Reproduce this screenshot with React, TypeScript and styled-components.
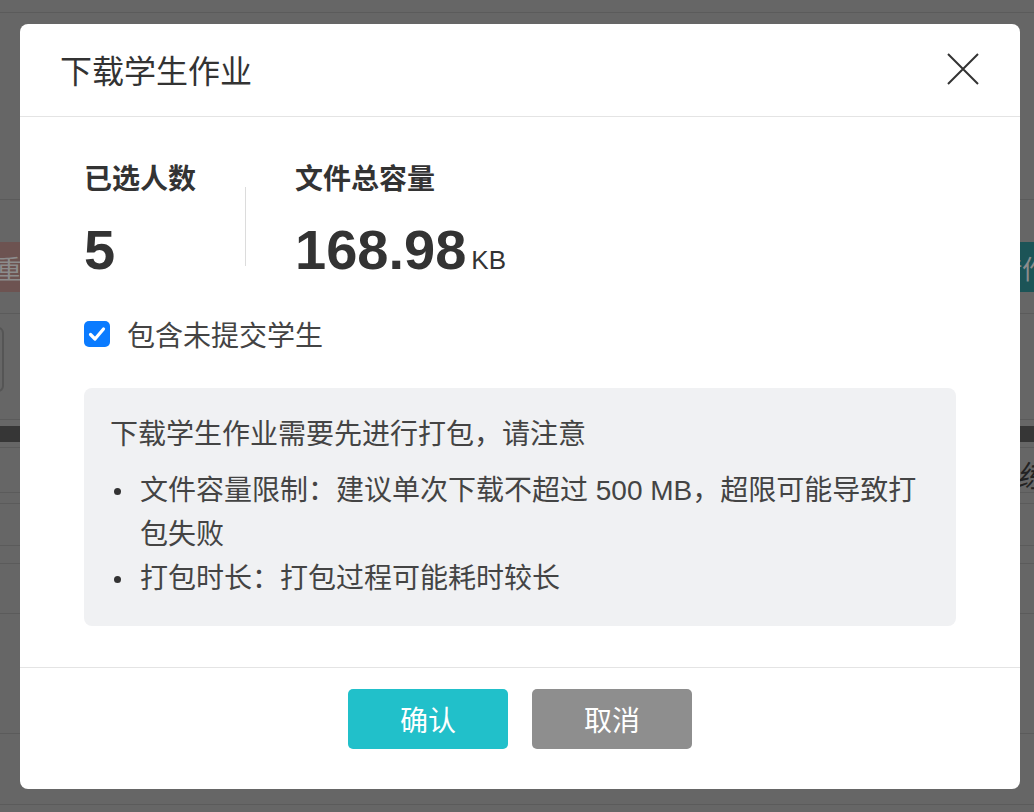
import React, { useState } from "react";
import styled, { createGlobalStyle } from "styled-components";

const GlobalStyle = createGlobalStyle`
  html, body {
    margin: 0;
    padding: 0;
  }
  body {
    font-family: "Helvetica Neue", "Liberation Sans", "Noto Sans CJK SC", sans-serif;
    color: #333;
  }
  * {
    box-sizing: border-box;
  }
`;

const Screen = styled.div`
  position: relative;
  width: 1034px;
  height: 812px;
  overflow: hidden;
  background: #666;
`;

/* dimmed page behind the dialog */
const BgPage = styled.div`
  display: flex;
  flex-direction: column;
`;

const BgRow = styled.div<{ $h: number; $top?: number }>`
  height: ${(p) => p.$h}px;
  padding-top: ${(p) => p.$top ?? 0}px;
  border-bottom: 1px solid #5b5b5b;
  display: flex;
  align-items: flex-start;
  justify-content: space-between;
`;

const BgSpacer = styled.div<{ $h: number }>`
  height: ${(p) => p.$h}px;
`;

const BgDarkBar = styled.div`
  height: 16px;
  background: #363636;
`;

const BgButton = styled.div<{ $tone: "red" | "teal" }>`
  height: 50px;
  width: 120px;
  display: flex;
  align-items: center;
  padding: ${(p) => (p.$tone === "red" ? "0" : "0 0 0 82px")};
  background: ${(p) => (p.$tone === "red" ? "#6d5351" : "#1c5457")};
  color: #8c8c8c;
  font-size: 26px;
  text-indent: ${(p) => (p.$tone === "red" ? "-4px" : "0")};
  white-space: nowrap;
`;

const BgInput = styled.div`
  margin-top: 13px;
  margin-left: -40px;
  width: 44px;
  height: 65px;
  border: 2px solid #555;
  border-radius: 6px;
`;

const BgText = styled.div`
  margin: 4px -12px 0 0;
  font-size: 30px;
  font-style: italic;
  color: #222;
`;

/* dialog */
const Overlay = styled.div`
  position: absolute;
  inset: 0;
  padding-left: 6px;
  display: flex;
  align-items: center;
  justify-content: center;
`;

const Dialog = styled.div`
  width: 1000px;
  background: #fff;
  border-radius: 8px;
  overflow: hidden;
`;

const Header = styled.div`
  height: 93px;
  padding: 0 41px 2px 40px;
  border-bottom: 1px solid #e4e4e4;
  display: flex;
  align-items: center;
  justify-content: space-between;
`;

const Title = styled.h2`
  margin: 0;
  font-size: 32px;
  font-weight: 400;
  color: #333;
`;

const CloseButton = styled.button`
  width: 32px;
  height: 32px;
  padding: 0;
  border: none;
  background: none;
  cursor: pointer;
  display: flex;
  align-items: center;
  justify-content: center;
`;

const Body = styled.div`
  padding: 43px 64px 41px;
`;

const Stats = styled.div`
  display: flex;
  align-items: flex-start;
  gap: 49px;
`;

const Stat = styled.div`
  display: flex;
  flex-direction: column;
`;

const StatLabel = styled.div`
  font-size: 28px;
  line-height: 40px;
  font-weight: 700;
  color: #333;
`;

const StatValue = styled.div`
  margin-top: 18px;
  font-size: 56px;
  line-height: 64px;
  font-weight: 700;
  color: #333;
`;

const Unit = styled.span`
  margin-left: 5px;
  font-size: 26px;
  line-height: 1;
  font-weight: 400;
`;

const VDivider = styled.div`
  width: 1px;
  height: 79px;
  margin-top: 27px;
  background: #dcdcdc;
`;

const CheckRow = styled.label`
  margin-top: 32px;
  display: flex;
  align-items: center;
  gap: 17px;
  height: 40px;
  cursor: pointer;
`;

const CheckBox = styled.span<{ $checked: boolean }>`
  width: 26px;
  height: 26px;
  border-radius: 5px;
  background: ${(p) => (p.$checked ? "#0a7bff" : "#fff")};
  border: ${(p) => (p.$checked ? "none" : "2px solid #999")};
  display: flex;
  align-items: center;
  justify-content: center;
`;

const CheckText = styled.span`
  font-size: 28px;
  color: #444;
`;

const Notice = styled.div`
  margin-top: 34px;
  padding: 25px 26px;
  background: #f0f1f3;
  border-radius: 8px;
  font-size: 28px;
  line-height: 44px;
  color: #444;
`;

const NoticeTitle = styled.p`
  margin: 0;
`;

const NoticeList = styled.ul`
  margin: 12px 0 0;
  padding: 0;
  list-style: none;
`;

const NoticeItem = styled.li`
  display: flex;
  &::before {
    content: "";
    flex: none;
    width: 7px;
    height: 7px;
    margin: 19px 19px 0 4px;
    border-radius: 50%;
    background: #333;
  }
`;

const Footer = styled.div`
  border-top: 1px solid #e4e4e4;
  padding: 21px 0 40px;
  display: flex;
  justify-content: center;
  gap: 24px;
`;

const Button = styled.button<{ $primary?: boolean }>`
  width: 160px;
  height: 60px;
  border: none;
  border-radius: 5px;
  background: ${(p) => (p.$primary ? "#21c0ca" : "#8e8e8e")};
  color: #fff;
  font-family: inherit;
  font-size: 28px;
  font-weight: 400;
  cursor: pointer;
`;

const App: React.FC = () => {
  const [includeAll, setIncludeAll] = useState(true);

  return (
    <Screen>
      <GlobalStyle />
      <BgPage>
        <BgRow $h={13} />
        <BgRow $h={187} />
        <BgRow $h={114} $top={42}>
          <BgButton $tone="red">重置</BgButton>
          <BgButton $tone="teal">借作</BgButton>
        </BgRow>
        <BgRow $h={106}>
          <BgInput />
        </BgRow>
        <BgSpacer $h={6} />
        <BgDarkBar />
        <BgRow $h={6} />
        <BgRow $h={45}>
          <span />
          <BgText>练</BgText>
        </BgRow>
        <BgRow $h={11} />
        <BgRow $h={42} />
        <BgRow $h={18} />
        <BgRow $h={50} />
        <BgRow $h={120} />
        <BgRow $h={71} />
      </BgPage>

      <Overlay>
        <Dialog>
          <Header>
            <Title>下载学生作业</Title>
            <CloseButton aria-label="关闭">
              <svg width="32" height="32" viewBox="0 0 32 32">
                <path d="M1 1 L31 31 M31 1 L1 31" stroke="#333" strokeWidth="2" fill="none" />
              </svg>
            </CloseButton>
          </Header>

          <Body>
            <Stats>
              <Stat>
                <StatLabel>已选人数</StatLabel>
                <StatValue>5</StatValue>
              </Stat>
              <VDivider />
              <Stat>
                <StatLabel>文件总容量</StatLabel>
                <StatValue>
                  168.98<Unit>KB</Unit>
                </StatValue>
              </Stat>
            </Stats>

            <CheckRow onClick={() => setIncludeAll(!includeAll)}>
              <CheckBox $checked={includeAll}>
                {includeAll && (
                  <svg width="18" height="18" viewBox="0 0 18 18">
                    <path
                      d="M2.5 9.5 L7 14 L15.5 4"
                      stroke="#fff"
                      strokeWidth="3.2"
                      strokeLinecap="round"
                      strokeLinejoin="round"
                      fill="none"
                    />
                  </svg>
                )}
              </CheckBox>
              <CheckText>包含未提交学生</CheckText>
            </CheckRow>

            <Notice>
              <NoticeTitle>下载学生作业需要先进行打包，请注意</NoticeTitle>
              <NoticeList>
                <NoticeItem>文件容量限制：建议单次下载不超过 500 MB，超限可能导致打包失败</NoticeItem>
                <NoticeItem>打包时长：打包过程可能耗时较长</NoticeItem>
              </NoticeList>
            </Notice>
          </Body>

          <Footer>
            <Button $primary>确认</Button>
            <Button>取消</Button>
          </Footer>
        </Dialog>
      </Overlay>
    </Screen>
  );
};

export default App;
